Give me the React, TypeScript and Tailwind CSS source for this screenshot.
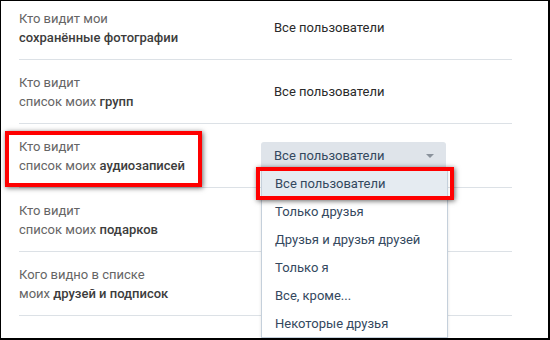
const rows = [
  { a: 'Кто видит мои', b: '', c: 'сохранённые фотографии', value: 'Все пользователи' },
  { a: 'Кто видит', b: 'список моих ', c: 'групп', value: 'Все пользователи' },
  { a: 'Кто видит', b: 'список моих ', c: 'аудиозаписей', value: null },
  { a: 'Кто видит', b: 'список моих ', c: 'подарков', value: '' },
  { a: 'Кого видно в списке', b: 'моих ', c: 'друзей и подписок', value: '' },
  { a: 'Кто видит', b: '', c: '', value: '' },
];

const options = [
  'Все пользователи',
  'Только друзья',
  'Друзья и друзья друзей',
  'Только я',
  'Все, кроме...',
  'Некоторые друзья',
];

export default function App() {
  return (
    <div
      className="relative w-[550px] h-[340px] overflow-hidden bg-white border-l border-t border-r-2 border-b-2 border-black text-[13px] leading-[19px]"
      style={{ fontFamily: 'Roboto, "Liberation Sans", sans-serif' }}
    >
      <div className="-mt-[5px] px-[18px] w-[529px]">
        {rows.map((r, i) => (
          <div
            key={i}
            className={`flex items-center h-[64px] ${i < rows.length - 1 ? 'border-b border-[#dce1e6]' : ''}`}
          >
            <div className="w-[242px] text-[#656565]">
              <div>{r.a}</div>
              <div>
                {r.b}
                <span className="font-medium text-[#3c3c3c]">{r.c}</span>
              </div>
            </div>
            <div className="flex-1">
              {r.value === null ? (
                <div className="flex items-center justify-between w-[185px] h-[28px] pl-[13px] pr-[12px] rounded-t-[3px] bg-[#dfe4ea] text-[#34485e]">
                  <span>Все пользователи</span>
                  <span className="w-0 h-0 border-l-[4px] border-r-[4px] border-t-[4px] border-l-transparent border-r-transparent border-t-[#8a929c]" />
                </div>
              ) : (
                <span className="pl-[13px] text-[#2a2a2a]">{r.value}</span>
              )}
            </div>
          </div>
        ))}
      </div>

      <div className="absolute left-[260px] top-[167px] w-[187px] bg-white border border-[#c5d0db] shadow-[0_1px_3px_rgba(0,0,0,0.12)] text-[#34485e]">
        {options.map((o, i) => (
          <div
            key={o}
            className={`h-[28px] flex items-center pl-[13px] ${i === 0 ? 'bg-[#e5ebf1]' : ''}`}
          >
            {o}
          </div>
        ))}
      </div>

      <div className="absolute left-[4px] top-[130px] w-[197px] h-[56px] border-[4px] border-[#ff0000] shadow-[1px_1px_5px_rgba(0,0,0,0.6)]" />
      <div className="absolute left-[255px] top-[166px] w-[198px] h-[33px] border-[4px] border-[#ff0000] shadow-[1px_1px_5px_rgba(0,0,0,0.6)]" />
    </div>
  );
}
